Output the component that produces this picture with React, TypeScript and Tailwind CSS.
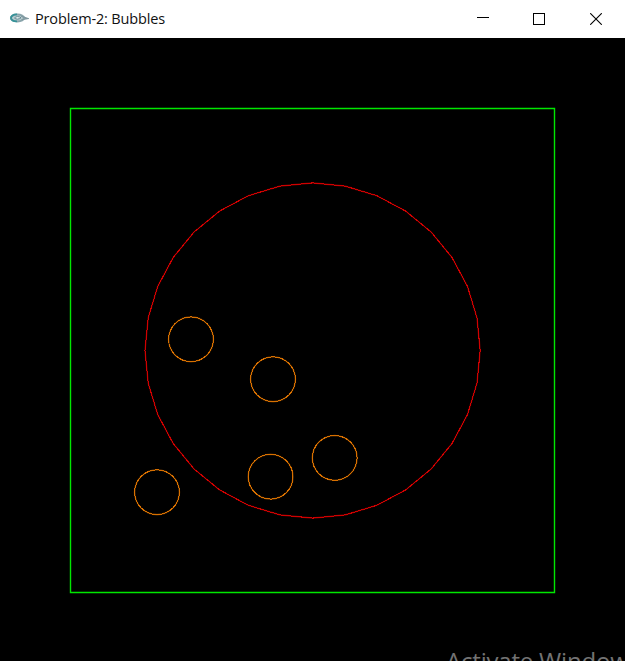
const bubbles = [
  { x: 191, y: 339.3 },
  { x: 273, y: 379.2 },
  { x: 334.7, y: 457.9 },
  { x: 270.6, y: 476.7 },
  { x: 157, y: 492.2 },
];

function ring(cx: number, cy: number, r: number, segments: number) {
  return Array.from({ length: segments }, (_, i) => {
    const a = (i * 2 * Math.PI) / segments;
    return `${(cx + r * Math.cos(a)).toFixed(2)},${(cy + r * Math.sin(a)).toFixed(2)}`;
  }).join(" ");
}

function Outline({ points, color }: { points: string; color: string }) {
  return (
    <>
      <polygon points={points} stroke={color} strokeWidth="1.6" opacity="0.4" />
      <polygon points={points} stroke={color} shapeRendering="crispEdges" />
    </>
  );
}

function AppIcon() {
  return (
    <svg width="20" height="12" viewBox="0 0 20 12" fill="none" className="relative -top-px shrink-0">
      <ellipse cx="8.5" cy="6" rx="6.6" ry="3.4" fill="#b9cdd1" stroke="#8aa5ac" strokeWidth="2" />
      <path d="M8 2.4C4 2.2 1.8 4 2 6.2C2.3 8.1 4.8 9.4 8 9.3" stroke="#369298" strokeWidth="1.8" />
      <path d="M5.5 6C7 4.2 10 4.2 12 5.8C10 7.4 7 7.6 5.5 6Z" fill="#eef4f5" stroke="#60868e" />
      <path d="M12 4.2L18.6 6.6L12.5 7.6" stroke="#80989f" strokeWidth="1.4" />
    </svg>
  );
}

function TitleBar() {
  return (
    <header className="flex h-[38px] shrink-0 items-center bg-white text-black">
      <div className="flex items-center pl-[9px]">
        <AppIcon />
        <h1 className="ml-1.5 whitespace-nowrap font-['Open_Sans','Noto_Sans',sans-serif] text-[14.5px] leading-5 tracking-[-0.15px] text-[#111]">
          Problem-2: Bubbles
        </h1>
      </div>
      <div className="ml-auto flex h-full items-center pr-[23px]">
        <button aria-label="Minimize" className="mr-11 h-3 w-3">
          <svg width="12" height="12" shapeRendering="crispEdges"><path d="M0 4.5H12" stroke="#000" /></svg>
        </button>
        <button aria-label="Maximize" className="mr-[45px] h-3 w-3">
          <svg width="12" height="12" shapeRendering="crispEdges"><path d="M.5.5H11.5V11.5H.5Z" fill="none" stroke="#000" /></svg>
        </button>
        <button aria-label="Close" className="h-3 w-3">
          <svg width="12" height="12"><path d="M.2.2L11.8 11.8M11.8.2L.2 11.8" stroke="#000" strokeWidth="1.1" /></svg>
        </button>
      </div>
    </header>
  );
}

export default function App() {
  return (
    <div className="flex h-[661px] w-[625px] flex-col overflow-hidden bg-black">
      <TitleBar />
      <main className="relative h-[623px] overflow-hidden bg-black">
        <svg width="625" height="623" viewBox="0 38 625 623" fill="none" className="block">
          <path d="M70.5 108.5H554.5V592.5H70.5Z" stroke="#00e600" strokeWidth="1.4" />
          <Outline points={ring(312.6, 350.5, 167.6, 32)} color="#d00000" />
          {bubbles.map((b) => (
            <Outline key={`${b.x}-${b.y}`} points={ring(b.x, b.y, 22.4, 32)} color="#d87000" />
          ))}
        </svg>
        <p className="absolute left-[446px] top-[607px] whitespace-nowrap font-['Open_Sans','Noto_Sans',sans-serif] text-[24px] leading-8 tracking-[-0.2px] text-[#737373]">
          Activate Windows
        </p>
      </main>
    </div>
  );
}
